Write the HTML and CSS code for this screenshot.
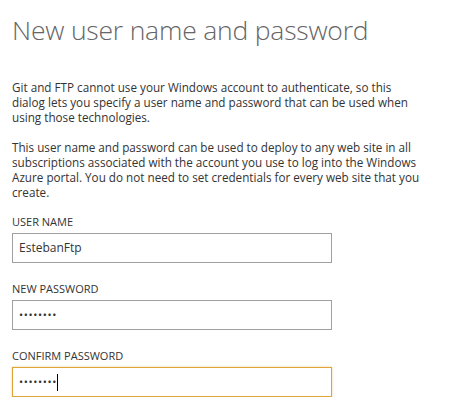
FILE: index.html
```html
<!DOCTYPE html>
<html>
<head>
<meta charset="utf-8">
<link rel="stylesheet" href="styles.css">
</head>
<body>
<div class="dialog">
  <h1 class="title">New user name and password</h1>
  <p class="para">Git and FTP cannot use your Windows account to authenticate, so this<br>dialog lets you specify a user name and password that can be used when<br>using those technologies.</p>
  <p class="para">This user name and password can be used to deploy to any web site in all<br>subscriptions associated with the account you use to log into the Windows<br>Azure portal. You do not need to set credentials for every web site that you<br>create.</p>
  <div class="field">
    <label class="label">USER NAME</label>
    <div class="input">EstebanFtp</div>
  </div>
  <div class="field">
    <label class="label">NEW PASSWORD</label>
    <div class="input dots">&#8226;&#8226;&#8226;&#8226;&#8226;&#8226;&#8226;&#8226;</div>
  </div>
  <div class="field">
    <label class="label">CONFIRM PASSWORD</label>
    <div class="input dots focus">&#8226;&#8226;&#8226;&#8226;&#8226;&#8226;&#8226;&#8226;<span class="caret"></span></div>
  </div>
</div>
</body>
</html>
```
FILE: styles.css
```css
html, body {
  margin: 0;
  padding: 0;
  background: #ffffff;
}
body {
  font-family: "Open Sans", "Noto Sans", sans-serif;
  color: #333333;
}
.dialog {
  padding: 0 0 0 12px;
  width: 430px;
}
.title {
  margin: 0;
  padding-top: 12px;
  font-weight: 300;
  font-size: 26.5px;
  line-height: 36px;
  color: #666666;
  letter-spacing: -0.2px;
  white-space: nowrap;
}
.para {
  margin: 0;
  font-size: 11.7px;
  line-height: 15px;
  color: #333333;
  white-space: nowrap;
}
.para:first-of-type {
  margin-top: 32px;
}
.para + .para {
  margin-top: 15px;
}
.field {
  display: flex;
  flex-direction: column;
  margin-top: 14px;
}
.field + .field {
  margin-top: 18px;
}
.label {
  font-size: 11px;
  line-height: 15px;
  color: #333333;
  margin-bottom: 4px;
}
.input {
  box-sizing: border-box;
  width: 320px;
  height: 30px;
  border: 1px solid #a0a0a0;
  padding: 0 6px;
  font-size: 12px;
  line-height: 28px;
  color: #333333;
  display: flex;
  align-items: center;
}
.dots {
  font-size: 11px;
  letter-spacing: 0.6px;
}
.focus {
  border-color: #e0a53a;
  box-shadow: 0 0 2px rgba(224, 165, 58, 0.6);
}
.caret {
  display: inline-block;
  width: 1px;
  height: 17px;
  background: #000000;
  margin-left: 0;
}
```
